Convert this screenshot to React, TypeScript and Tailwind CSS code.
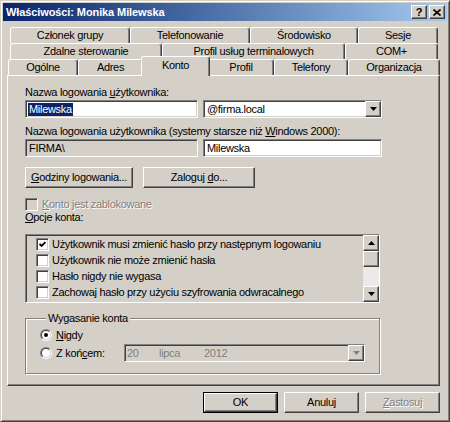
import React from "react";

const RAISED =
  "border border-t-white border-l-white border-r-[#404040] border-b-[#404040] shadow-[inset_-1px_-1px_0_#808080]";
const SUNKEN =
  "border border-t-[#808080] border-l-[#808080] border-r-white border-b-white shadow-[inset_1px_1px_0_#404040,inset_-1px_-1px_0_#D4D0C8]";
const DIS = "text-[#808080] [text-shadow:1px_1px_0_#fff]";

function U({ children }: { children: React.ReactNode }) {
  return <span className="underline underline-offset-[1px] decoration-1">{children}</span>;
}

function Arrow({ dir = "down", color = "#000" }: { dir?: "up" | "down"; color?: string }) {
  return (
    <svg width="7" height="4" viewBox="0 0 7 4">
      {dir === "down" ? (
        <polygon points="0,0 7,0 3.5,4" fill={color} />
      ) : (
        <polygon points="0,4 7,4 3.5,0" fill={color} />
      )}
    </svg>
  );
}

function DropBtn({ disabled = false }: { disabled?: boolean }) {
  return (
    <div className={`w-[16px] bg-[#D4D0C8] ${RAISED} flex items-center justify-center`}>
      <Arrow color={disabled ? "#808080" : "#000"} />
    </div>
  );
}

function Check({ checked = false, disabled = false }: { checked?: boolean; disabled?: boolean }) {
  return (
    <div
      className={`w-[13px] h-[13px] shrink-0 ${SUNKEN} ${disabled ? "bg-[#D4D0C8]" : "bg-white"} flex items-center justify-center`}
    >
      {checked && (
        <svg width="7" height="7" viewBox="0 0 7 7">
          <path d="M0.6 3 L2.6 5 L6.4 1.2" stroke="#000" strokeWidth="1.8" fill="none" />
        </svg>
      )}
    </div>
  );
}

function Radio({ checked = false }: { checked?: boolean }) {
  return (
    <div className="w-[12px] h-[12px] shrink-0 rounded-full border border-t-[#808080] border-l-[#808080] border-r-white border-b-white">
      <div className="w-full h-full rounded-full border border-t-[#404040] border-l-[#404040] border-r-[#D4D0C8] border-b-[#D4D0C8] bg-white flex items-center justify-center">
        {checked && <div className="w-[4px] h-[4px] rounded-full bg-black" />}
      </div>
    </div>
  );
}

function Tab({ w, children }: { w: string; children: React.ReactNode }) {
  return (
    <div
      className={`${w} shrink-0 border-t border-l border-r border-t-white border-l-white border-r-[#404040] shadow-[inset_-1px_0_0_#808080] rounded-t-[3px] flex items-center justify-center whitespace-nowrap`}
    >
      {children}
    </div>
  );
}

function Btn({
  w,
  children,
  disabled = false,
  def = false,
}: {
  w: string;
  children: React.ReactNode;
  disabled?: boolean;
  def?: boolean;
}) {
  const inner = (
    <div className={`w-full h-full ${RAISED} flex items-center justify-center whitespace-nowrap ${disabled ? DIS : ""}`}>
      {children}
    </div>
  );
  return (
    <div className={`${w} h-[21px] shrink-0 ${def ? "border border-black" : ""}`}>{inner}</div>
  );
}

export default function App() {
  return (
    <div className="w-[450px] h-[422px] overflow-hidden bg-[#D4D0C8] border border-t-[#D4D0C8] border-l-[#D4D0C8] border-r-[#404040] border-b-[#404040] shadow-[inset_1px_1px_0_#fff,inset_-1px_-1px_0_#808080] p-[2px] font-['Liberation_Sans',Arial,sans-serif] text-[11px] leading-[13px] tracking-[-0.3px] text-black select-none flex flex-col">
      {/* Title bar */}
      <div className="h-[18px] shrink-0 bg-linear-to-r from-[#0A246A] to-[#A6CAF0] flex items-center pl-[3px] pr-[2px]">
        <span className="flex-1 text-white font-bold whitespace-nowrap tracking-[-0.1px]">Właściwości: Monika Milewska</span>
        <div className={`w-[16px] h-[14px] bg-[#D4D0C8] ${RAISED} flex items-center justify-center font-bold text-[11px] leading-[11px]`}>
          ?
        </div>
        <div className={`ml-[2px] w-[16px] h-[14px] bg-[#D4D0C8] ${RAISED} flex items-center justify-center`}>
          <svg width="8" height="7" viewBox="0 0 8 7">
            <path d="M0.5 0.5 L7.5 6.5 M7.5 0.5 L0.5 6.5" stroke="#000" strokeWidth="1.6" />
          </svg>
        </div>
      </div>

      {/* Tabs */}
      <div className="flex flex-col pt-[6px]">
        <div className="flex h-[16px] ml-[7px]">
          <Tab w="w-[120px]">Członek grupy</Tab>
          <Tab w="w-[120px]">Telefonowanie</Tab>
          <Tab w="w-[108px]">Środowisko</Tab>
          <Tab w="w-[80px]">Sesje</Tab>
        </div>
        <div className="flex h-[16px] ml-[7px]">
          <Tab w="w-[152px]">Zdalne sterowanie</Tab>
          <Tab w="w-[183px]">Profil usług terminalowych</Tab>
          <Tab w="w-[93px]">COM+</Tab>
        </div>
        <div className="flex h-[16px] ml-[5px]">
          <Tab w="w-[70px]">Ogólne</Tab>
          <Tab w="w-[65px]">Adres</Tab>
          <div className="relative z-10 self-end -mx-[2px] -mb-[1px] h-[20px] w-[69px] shrink-0 bg-[#D4D0C8] border-t border-l border-r border-t-white border-l-white border-r-[#404040] shadow-[inset_-1px_0_0_#808080] rounded-t-[3px] flex items-center justify-center pb-[3px]">
            Konto
          </div>
          <Tab w="w-[66px]">Profil</Tab>
          <Tab w="w-[74px]">Telefony</Tab>
          <Tab w="w-[92px]">Organizacja</Tab>
        </div>

        {/* Panel */}
        <div className={`ml-[4px] w-[433px] h-[311px] ${RAISED} flex flex-col pl-[17px] pt-[10px]`}>
          <div className="h-[13px] whitespace-nowrap">
            Nazwa logowania <U>u</U>żytkownika:
          </div>
          <div className="mt-[1px] flex">
            <div className={`w-[173px] h-[18px] bg-white ${SUNKEN} flex items-center pl-[2px]`}>
              <span className="bg-[#0A246A] text-white px-[1px]">Milewska</span>
            </div>
            <div className={`ml-[5px] w-[179px] h-[18px] bg-white ${SUNKEN} flex`}>
              <div className="flex-1 flex items-center pl-[3px]">@firma.local</div>
              <DropBtn />
            </div>
          </div>

          <div className="mt-[7px] h-[13px] whitespace-nowrap">
            Nazwa logowania użytkownika (systemy starsze niż <U>W</U>indows 2000):
          </div>
          <div className="mt-[1px] flex">
            <div className={`w-[173px] h-[18px] bg-[#D4D0C8] ${SUNKEN} flex items-center pl-[3px]`}>FIRMA\</div>
            <div className={`ml-[5px] w-[179px] h-[18px] bg-white ${SUNKEN} flex items-center pl-[3px]`}>
              Milewska
            </div>
          </div>

          <div className="mt-[10px] flex">
            <Btn w="w-[108px]">
              <span>
                <U>G</U>odziny logowania...
              </span>
            </Btn>
            <div className="ml-[10px]">
              <Btn w="w-[112px]">
                <span>
                  Zaloguj <U>d</U>o...
                </span>
              </Btn>
            </div>
          </div>

          <div className="mt-[10px] h-[12px] flex items-center">
            <Check disabled />
            <span className={`ml-[4px] ${DIS}`}>
              <U>K</U>onto jest zablokowane
            </span>
          </div>
          <div className="h-[12px] mt-[1px] flex items-center">
            <span>
              <U>O</U>pcje konta:
            </span>
          </div>

          <div className={`mt-[11px] w-[355px] h-[69px] bg-[#D4D0C8] ${SUNKEN} flex overflow-hidden`}>
            <div className="flex-1 flex flex-col pl-[10px] pt-[1px]">
              {[
                ["Użytkownik musi zmienić hasło przy następnym logowaniu", true],
                ["Użytkownik nie może zmienić hasła", false],
                ["Hasło nigdy nie wygasa", false],
                ["Zachowaj hasło przy użyciu szyfrowania odwracalnego", false],
              ].map(([t, c]) => (
                <div key={t as string} className="h-[16px] shrink-0 flex items-center whitespace-nowrap">
                  <Check checked={c as boolean} />
                  <span className="ml-[3px]">{t as string}</span>
                </div>
              ))}
            </div>
            <div className="w-[16px] flex flex-col">
              <div className={`h-[16px] shrink-0 bg-[#D4D0C8] ${RAISED} flex items-center justify-center`}>
                <Arrow dir="up" />
              </div>
              <div className={`h-[16px] shrink-0 bg-[#D4D0C8] ${RAISED}`} />
              <div className="flex-1 bg-[#ECEAE6]" />
              <div className={`h-[16px] shrink-0 bg-[#D4D0C8] ${RAISED} flex items-center justify-center`}>
                <Arrow dir="down" />
              </div>
            </div>
          </div>

          <fieldset className="mt-[9px] w-[355px] border border-[#808080] shadow-[1px_1px_0_#fff,inset_1px_1px_0_#fff] pl-[14px] pb-[11px]">
            <legend className="ml-[6px] px-[2px] bg-[#D4D0C8] leading-[13px]">Wygasanie konta</legend>
            <div className="mt-[2px] h-[16px] flex items-center">
              <Radio checked />
              <span className="ml-[4px]">
                <U>N</U>igdy
              </span>
            </div>
            <div className="mt-[1px] h-[18px] flex items-center">
              <Radio />
              <span className="ml-[4px] w-[68px] whitespace-nowrap">
                Z koń<U>c</U>em:
              </span>
              <div className={`w-[241px] h-[18px] bg-[#D4D0C8] ${SUNKEN} flex text-[#808080]`}>
                <div className="flex-1 flex items-center pl-[2px]">
                  <span className="w-[32px]">20</span>
                  <span className="w-[45px]">lipca</span>
                  <span>2012</span>
                </div>
                <DropBtn disabled />
              </div>
            </div>
          </fieldset>
        </div>

        {/* Bottom buttons */}
        <div className="mt-[6px] ml-[200px] flex gap-[6px]">
          <Btn w="w-[75px]" def>
            OK
          </Btn>
          <Btn w="w-[75px]">Anuluj</Btn>
          <Btn w="w-[75px]" disabled>
            <span>
              <U>Z</U>astosuj
            </span>
          </Btn>
        </div>
      </div>
    </div>
  );
}
